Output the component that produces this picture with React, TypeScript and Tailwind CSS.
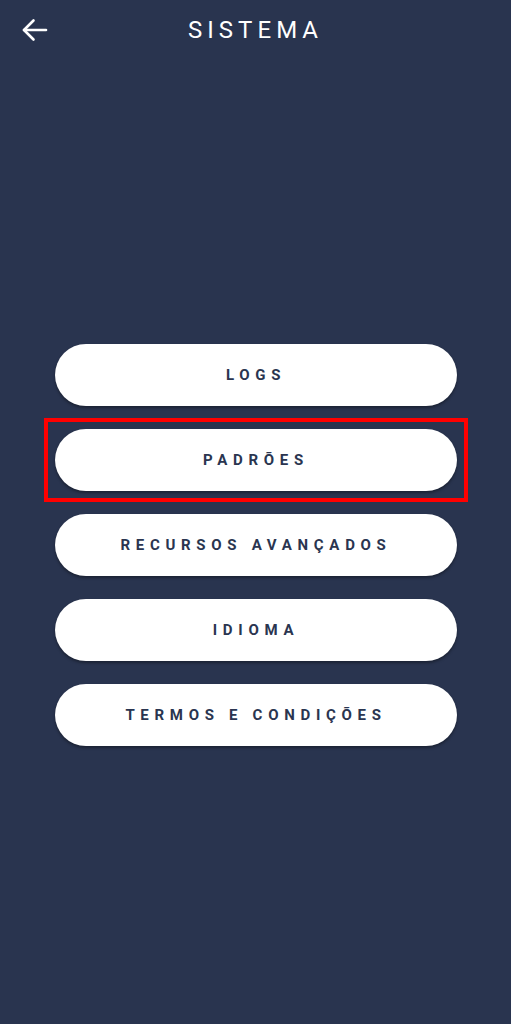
const items = ["LOGS", "PADRÕES", "RECURSOS AVANÇADOS", "IDIOMA", "TERMOS E CONDIÇÕES"];

const App = () => {
  return (
    <div className="min-h-screen w-full bg-[#29344f] font-['Roboto',sans-serif]">
      {/* Header */}
      <header className="relative flex h-[60px] items-center justify-center">
        <button className="absolute left-[21px] top-[18px] text-white">
          <svg width="27" height="24" viewBox="0 0 27 24" fill="none" stroke="currentColor" strokeWidth="2.6" strokeLinecap="round" strokeLinejoin="round">
            <path d="M3 12h22" />
            <path d="M12.5 2.5 3 12l9.5 9.5" />
          </svg>
        </button>
        <h1 className="text-[24px] font-normal tracking-[0.21em] text-white">SISTEMA</h1>
      </header>

      {/* Menu */}
      <div className="mt-[284px] flex flex-col gap-[23px] pl-[55px] pr-[54px]">
        {items.map((label) => (
          <div key={label} className="relative">
            {label === "PADRÕES" && (
              <div className="pointer-events-none absolute -inset-[11px] border-[4px] border-[#ff0000]" />
            )}
            <button className="flex h-[62px] w-full items-center justify-center rounded-full bg-white text-[15px] font-bold tracking-[0.38em] text-[#2a3550] shadow-[0_2px_3px_rgba(0,0,0,0.35)]">
              {label}
            </button>
          </div>
        ))}
      </div>
    </div>
  );
};

export default App;
